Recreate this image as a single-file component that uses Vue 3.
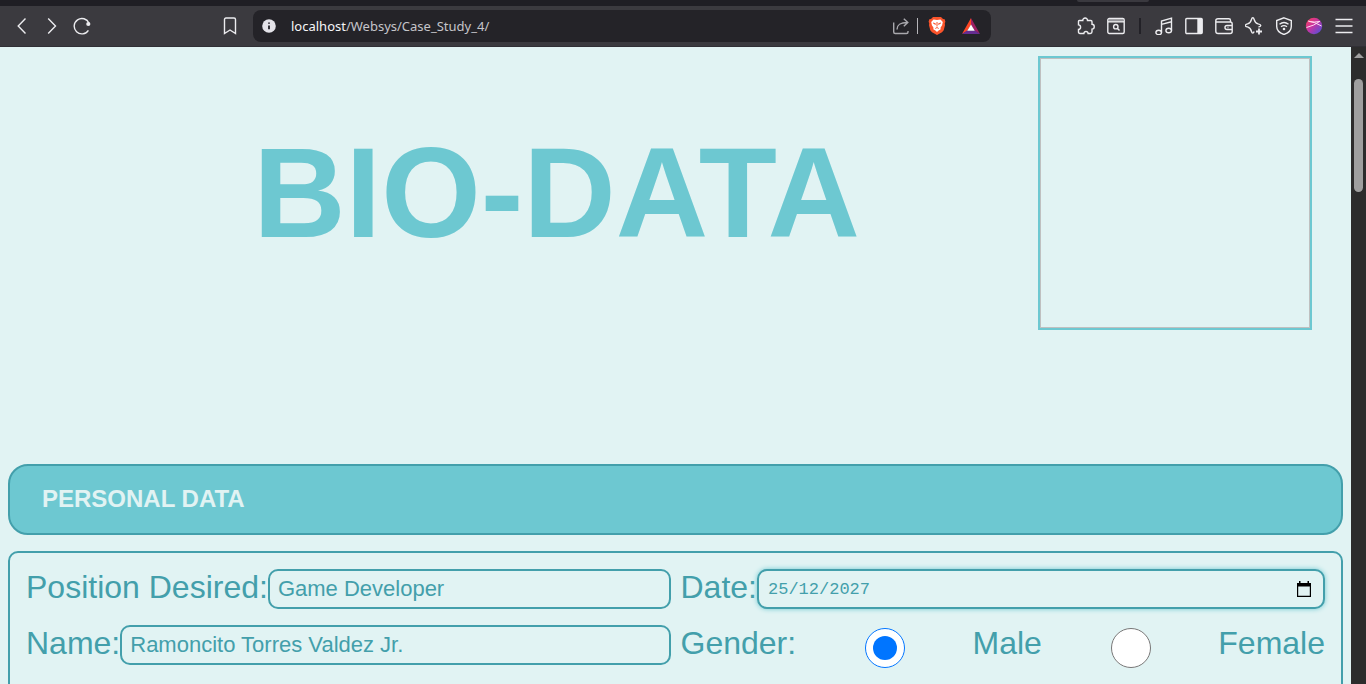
<script setup>
import { ref } from 'vue'

const address = ref('localhost/Websys/Case_Study_4/')
const position = ref('Game Developer')
const date = ref('25/12/2027')
const fullName = ref('Ramoncito Torres Valdez Jr.')
const gender = ref('male')
</script>

<template>
  <div class="browser">
    <div class="tabs"><span class="tab-edge"></span></div>
    <header class="toolbar">
      <nav class="nav-group" aria-label="Navigation">
        <button class="tool" aria-label="Back">
          <svg viewBox="0 0 18 18"><path d="M12.500 1.500 5.200 9l7.300 7.500" /></svg>
        </button>
        <button class="tool" aria-label="Forward">
          <svg viewBox="0 0 18 18"><path d="M5.200 1.500 12.500 9l-7.300 7.500" /></svg>
        </button>
        <button class="tool" aria-label="Reload">
          <svg viewBox="0 0 18 18"><path d="M15.400 13.300A7.700 7.700 0 1 1 16 6.200" /><circle class="solid" cx="15.300" cy="7" r="2.100" /></svg>
        </button>
        <button class="tool bookmark" aria-label="Bookmark">
          <svg viewBox="0 0 18 18"><path d="M3.500 2.500q0-1.500 1.500-1.500h8q1.500 0 1.500 1.500V16.500L9 13l-5.500 3.500Z" /></svg>
        </button>
      </nav>

      <div class="address">
        <button class="site-info" aria-label="Site information">
          <svg viewBox="0 0 14 14"><circle class="disc" cx="7" cy="7" r="6.800" /><path class="info" d="M7 6.400v3.800M7 3.400v1.400" /></svg>
        </button>
        <span class="url"><span class="host">localhost</span>{{ address.slice(9) }}</span>
        <button class="tool share" aria-label="Share">
          <svg viewBox="0 0 18 18"><path d="M1.700 5.500v9.500q0 1.500 1.500 1.500h11.300q1.500 0 1.500-1.500v-1M5 12.500c.2-4.500 2.500-7 10.500-7M11.800 1.700l4 3.800-4 3.800" /></svg>
        </button>
        <span class="divider light"></span>
        <button class="tool" aria-label="Shields">
          <svg viewBox="0 0 18 18">
            <path fill="#fb542b" stroke="none" d="M5 0h8l2 2 1.700.2.700 2.600-.6 1.500.2 2-1.300 5-1.700 2L9 18l-5-2.700-1.700-2-1.300-5 .2-2L.6 4.800l.7-2.600L3 2z" />
            <path fill="#fff" stroke="none" d="m5.500 2.400 3.500.6 3.500-.6 2.300 2.700-.7 3.100-1.600 2.500.2 1.500-2.100 1.300L9 15l-1.600-1.500-2.100-1.300.2-1.500-1.600-2.500-.7-3.100z" />
            <path stroke="#fb542b" stroke-width="1" d="m5 6 2.400.7-.4 1.200M13 6l-2.400.7.4 1.200M9 5v4.500M7.300 11.500 9 10.500l1.700 1" />
          </svg>
        </button>
        <button class="tool rewards" aria-label="Rewards">
          <svg viewBox="0 0 18 18">
            <path fill="#ff4724" stroke="none" d="M9 1v7L5 14l-5 3z" />
            <path fill="#9e1f63" stroke="none" d="M9 1v7l4 6 5 3z" />
            <path fill="#662d91" stroke="none" d="M0 17l5-3.500h8l5 3.500z" />
            <path fill="#fff" stroke="none" d="m9 7.500 3.800 6.300H5.200z" />
          </svg>
        </button>
      </div>

      <div class="tool-group">
        <button class="tool" aria-label="Extensions">
          <svg viewBox="0 0 18 18"><path d="M2.200 3.500h3.600C5.500.2 10.800.2 10.500 3.500h3.300q1.200 0 1.200 1.200v2.600c3 .2 3 4.600 0 4.800v2.700q0 1.700-1.700 1.700h-2.200c-.2-2.600-4-2.600-4.200 0H3q-1.500 0-1.500-1.500v-2.600c2.800-.2 2.800-4.300 0-4.500V4.300q0-.8.7-.8Z" /></svg>
        </button>
        <button class="tool" aria-label="Search page">
          <svg viewBox="0 0 18 18"><rect x=".8" y="1.500" width="16.400" height="15" rx="1.500" /><path stroke="#bcbcc0" d="M1.500 3h15" /><path d="M1 4.800h16" /><circle cx="8.800" cy="9.700" r="2.200" /><path d="m10.500 11.400 2 2" /></svg>
        </button>
        <span class="divider dark"></span>
        <button class="tool" aria-label="Playlist">
          <svg viewBox="0 0 18 18"><ellipse cx="3.700" cy="15.500" rx="2.800" ry="2.200" /><ellipse cx="13.700" cy="13.500" rx="2.800" ry="2.200" /><path d="M6.500 15.500V4L16.500 1.200v12.300M6.500 7.400l10-2.600" /></svg>
        </button>
        <button class="tool" aria-label="Sidebar">
          <svg viewBox="0 0 18 18"><rect x=".8" y="1.500" width="16.400" height="15" rx="1" /><path class="solid" d="M12.300 2H17v14h-4.700z" /></svg>
        </button>
        <button class="tool" aria-label="Wallet">
          <svg viewBox="0 0 18 18"><path d="M15.500 5V3.500q0-1.700-1.700-1.700H3q-2.200 0-2.200 2v10.400q0 2.300 2.300 2.300h12q2.100 0 2.100-2V7q0-2-2-2H1.500M17 8.500h-5q-2 0-2 2t2 2h5M12.600 10.500h.8" /></svg>
        </button>
        <button class="tool" aria-label="Assistant">
          <svg viewBox="0 0 18 18"><path d="M13.500 10q2.300-.6 2.300-1.600c0-.7-1-1.100-2.700-1.500-2.300-.7-3.400-2-4-4.600C8.800 1 8.400.7 7.800.7S6.800 1 6.500 2.300c-.6 2.600-1.700 3.900-4 4.600C1 7.300.3 7.700.3 8.400s.7 1.100 2.200 1.500c2.300.7 3.400 2 4 4.600.3 1.200.7 1.600 1.300 1.600s1-.6 1.300-1.600" /><path stroke-width="1.800" d="M14 11.500v6M11 14.500h6" /></svg>
        </button>
        <button class="tool" aria-label="VPN">
          <svg viewBox="0 0 18 18"><path d="M9 .8 16.300 3.500v6c0 4-3.300 6.600-7.300 8-4-1.400-7.300-4-7.300-8v-6zM4.500 7.300q4.500-3.500 9 0M6 9.700q3-2.200 6 0" /><circle class="solid" cx="9" cy="12" r="1.300" /></svg>
        </button>
        <button class="tool" aria-label="Profile">
          <svg viewBox="0 0 18 18">
            <defs><linearGradient id="profile-fill" x1="0" y1="0" x2="1" y2="1"><stop offset="0" stop-color="#ff4052" /><stop offset=".45" stop-color="#c734a4" /><stop offset="1" stop-color="#4055e0" /></linearGradient></defs>
            <circle cx="9" cy="9" r="8.200" fill="url(#profile-fill)" stroke="none" />
            <path stroke="#ffd8ee" stroke-width="1" d="M3 4q7 1 13.500 5M1.500 10.500q8-2 13-6M4 4.500q5 1 11 0" />
          </svg>
        </button>
        <button class="tool" aria-label="Menu">
          <svg viewBox="0 0 18 18"><path d="M.5 2.500h17M.5 9h17M.5 15.500h17" /></svg>
        </button>
      </div>
    </header>

    <div class="viewport">
      <main class="page">
        <div class="masthead">
          <h1>BIO-DATA</h1>
          <div class="photo"></div>
        </div>
        <h2>PERSONAL DATA</h2>
        <form class="panel" @submit.prevent>
          <div class="field">
            <label for="position">Position Desired:</label>
            <input id="position" v-model="position" class="box" type="text" />
          </div>
          <div class="field">
            <label for="date">Date:</label>
            <div class="box date-box">
              <input id="date" v-model="date" type="text" />
              <button type="button" class="calendar" aria-label="Choose date">
                <svg viewBox="0 0 16 16"><path fill="#000" fill-rule="evenodd" d="M1 2h2V0h1.500v2h7V0H13v2h2v14H1zM2.200 5.500v9.300h11.600V5.500z" /></svg>
              </button>
            </div>
          </div>
          <div class="field">
            <label for="name">Name:</label>
            <input id="name" v-model="fullName" class="box" type="text" />
          </div>
          <div class="field choices" role="radiogroup" aria-labelledby="gender-label">
            <span id="gender-label">Gender:</span>
            <input id="male" v-model="gender" type="radio" name="gender" value="male" />
            <label for="male">Male</label>
            <input id="female" v-model="gender" type="radio" name="gender" value="female" />
            <label for="female">Female</label>
          </div>
        </form>
      </main>
      <div class="scrollbar">
        <svg class="arrow" viewBox="0 0 10 5"><path d="M0 5 5 0l5 5z" /></svg>
        <div class="thumb"></div>
      </div>
    </div>
  </div>
</template>

<style>
body {
  margin: 0;
  overflow: hidden;
}
</style>

<style scoped>
* {
  box-sizing: border-box;
}
.browser {
  display: flex;
  flex-direction: column;
  height: 100vh;
  font-family: Arial, "Liberation Sans", sans-serif;
}
.tabs {
  display: flex;
  justify-content: flex-end;
  flex: none;
  height: 6px;
  padding-right: 217px;
  background: #1f1e24;
}
.tab-edge {
  width: 72px;
  height: 2px;
  border-radius: 0 0 4px 4px;
  background: #3a393f;
}
.toolbar {
  display: flex;
  align-items: center;
  flex: none;
  height: 41px;
  border-bottom: 1px solid #302f35;
  background: #3b3a3f;
}
button {
  padding: 0;
  border: 0;
  background: none;
}
svg {
  display: block;
  fill: none;
  stroke: #ececef;
  stroke-width: 1.4;
}
.tool {
  display: grid;
  place-items: center;
  flex: none;
  width: 30px;
  height: 30px;
}
.tool svg {
  width: 18px;
  height: 18px;
}
.solid {
  fill: #ececef;
  stroke: none;
}
.nav-group {
  display: flex;
  width: 253px;
  padding: 0 8px 0 7px;
}
.bookmark {
  margin-left: auto;
}
.address {
  display: flex;
  align-items: center;
  flex: 1;
  height: 32px;
  padding: 0 5px 0 9px;
  border-radius: 8px;
  background: #242328;
}
.site-info svg {
  width: 14px;
  height: 14px;
}
.disc {
  fill: #e4e3e9;
  stroke: none;
}
.info {
  stroke: #34333a;
  stroke-width: 2;
}
.url {
  flex: 1;
  margin-left: 15px;
  color: #c6c5ca;
  font: 13px/20px "Noto Sans", sans-serif;
}
.host {
  color: #f6f6f8;
}
.share svg {
  stroke: #a9a8ad;
}
.divider {
  flex: none;
  height: 16px;
}
.light {
  width: 1px;
  margin: 0 4px 0 1px;
  background: #b5b4b9;
}
.dark {
  width: 2px;
  margin: 0 8px;
  background: #222127;
}
.rewards {
  margin-left: 4px;
}
.tool-group {
  display: flex;
  align-items: center;
  justify-content: flex-end;
  width: 375px;
  padding-right: 7px;
}
.viewport {
  display: flex;
  flex: 1;
  min-height: 0;
  background: #e1f3f3;
}
.page {
  flex: 1;
  padding: 9px 8px;
  overflow: hidden;
  color: #439fab;
}
.masthead {
  display: flex;
  padding: 0 31px 0 67px;
}
h1 {
  flex: 1;
  margin: 63px 0 0;
  color: #6dc8d1;
  font-size: 128px;
  line-height: 147px;
  text-align: center;
}
.photo {
  width: 274px;
  height: 274px;
  border: 2px solid #6dc8d1;
  box-shadow: inset 0 0 0 1px #bfc0c0;
}
h2 {
  margin: 134px 0 16px;
  padding: 19px 32px 21px;
  border: 2px solid #439fab;
  border-radius: 20px;
  background: #6dc8d1;
  color: #e1f3f3;
  font-size: 24px;
  line-height: 27px;
}
.panel {
  display: grid;
  grid-template-columns: 1fr 1fr;
  gap: 16px 10px;
  padding: 16px 16px 72px;
  border: 2px solid #439fab;
  border-radius: 10px;
}
.field {
  display: flex;
  align-items: flex-start;
  min-width: 0;
  font-size: 32px;
  line-height: 37px;
}
.box {
  flex: 1;
  min-width: 0;
  height: 40px;
  padding: 0 8px;
  border: 2px solid #439fab;
  border-radius: 10px;
  outline: 0;
  background: transparent;
  color: #439fab;
  font: 22px "Liberation Sans", Arial, sans-serif;
}
.date-box {
  display: flex;
  align-items: center;
  padding: 0 11px 0 9px;
  box-shadow: 0 0 5px #6dc8d1;
  background: #e1f3f3;
}
.date-box input {
  flex: 1;
  min-width: 0;
  padding: 0;
  border: 0;
  outline: 0;
  background: transparent;
  color: #439fab;
  font: 17px "Liberation Mono", monospace;
}
.calendar svg {
  width: 16px;
  height: 16px;
  stroke: none;
}
.choices {
  justify-content: space-between;
}
.choices input {
  width: 40px;
  height: 40px;
  margin: 3px 3px 0 5px;
}
.scrollbar {
  display: flex;
  flex-direction: column;
  align-items: center;
  width: 15px;
  padding-top: 6px;
  background: #2c2c2c;
}
.arrow {
  width: 10px;
  height: 5px;
  fill: #9f9f9f;
  stroke: none;
}
.thumb {
  width: 9px;
  height: 113px;
  margin-top: 21px;
  border-radius: 5px;
  background: #9f9f9f;
}
</style>
